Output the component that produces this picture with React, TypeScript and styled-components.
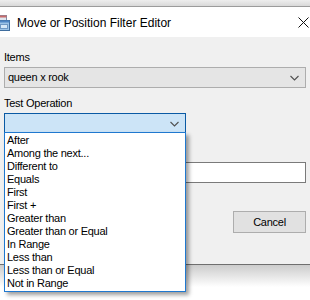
import React from "react";
import styled, { createGlobalStyle } from "styled-components";

const Global = createGlobalStyle`
  html, body { margin: 0; padding: 0; background: #ffffff; }
  body { overflow: hidden; font-family: "Liberation Sans", Arial, sans-serif; }
`;

const Page = styled.div`
  width: 310px;
  height: 300px;
  overflow: hidden;
  display: flex;
  flex-direction: column;
`;

const TopShade = styled.div`
  height: 6px;
  background: linear-gradient(#eeeeee, #d9d9d9);
  flex: none;
`;

const Window = styled.div`
  border-top: 1px solid #9c9c9c;
  border-bottom: 1px solid #6f6f6f;
  display: flex;
  flex-direction: column;
  flex: none;
`;

const TitleBar = styled.div`
  height: 30px;
  background: #ffffff;
  display: flex;
  align-items: center;
  padding-right: 1px;
`;

const AppIcon = styled.svg`
  width: 16px;
  height: 16px;
  margin-left: -6px;
  margin-top: 1px;
  flex: none;
`;

const Title = styled.div`
  font-family: "Liberation Sans", Arial, sans-serif;
  font-size: 12px;
  color: #000;
  margin-left: 7px;
  flex: 1;
  margin-top: 1px;
`;

const CloseIcon = styled.svg`
  width: 11px;
  height: 11px;
  flex: none;
`;

const Body = styled.div`
  position: relative;
  height: 213px;
  background: #f0f0f0;
  padding: 14px 4px 0 4px;
  display: flex;
  flex-direction: column;
  font-size: 11px;
  letter-spacing: -0.25px;
  color: #000;
`;

const Label = styled.div<{ $gap?: number }>`
  height: 13px;
  line-height: 13px;
  margin-top: ${(p) => p.$gap ?? 0}px;
`;

const Combo = styled.div<{ $active?: boolean; $width?: number }>`
  box-sizing: border-box;
  height: 21px;
  width: ${(p) => (p.$width ? `${p.$width}px` : "100%")};
  border: 1px solid ${(p) => (p.$active ? "#0a5aa4" : "#adadad")};
  background: ${(p) => (p.$active ? "#cce4f7" : "#e5e5e5")};
  display: flex;
  align-items: center;
  padding: 0 6px 0 3px;
  margin-top: 3px;
`;

const ComboText = styled.span`
  flex: 1;
  line-height: 13px;
`;

const Chevron = styled.svg`
  width: 9px;
  height: 6px;
  flex: none;
`;

const TextBox = styled.div`
  box-sizing: border-box;
  height: 21px;
  margin-top: 28px;
  background: #fff;
  border: 1px solid #7a7a7a;
`;

const ButtonRow = styled.div`
  display: flex;
  justify-content: flex-end;
  margin-top: 28px;
`;

const Button = styled.div`
  box-sizing: border-box;
  width: 73px;
  height: 22px;
  border: 1px solid #adadad;
  background: #e1e1e1;
  display: flex;
  align-items: center;
  justify-content: center;
`;

const DropList = styled.div`
  position: absolute;
  left: 4px;
  top: 95px;
  width: 182px;
  box-sizing: border-box;
  border: 1px solid #1f78cf;
  background: #fff;
  padding: 1px 0 1px 2px;
  box-shadow: 3px 3px 4px rgba(0, 0, 0, 0.38);
  z-index: 2;
`;

const Option = styled.div`
  height: 13px;
  line-height: 13px;
  white-space: nowrap;
`;

const BottomShade = styled.div`
  height: 22px;
  background: linear-gradient(#cccccc, #ffffff);
  flex: none;
`;

const options = [
  "After",
  "Among the next...",
  "Different to",
  "Equals",
  "First",
  "First +",
  "Greater than",
  "Greater than or Equal",
  "In Range",
  "Less than",
  "Less than or Equal",
  "Not in Range",
];

const ChevronDown = () => (
  <Chevron viewBox="0 0 9 6">
    <path d="M0.5 1 L4.5 5 L8.5 1" fill="none" stroke="#505050" strokeWidth="1.1" />
  </Chevron>
);

export default function App() {
  return (
    <>
      <Global />
      <Page>
        <TopShade />
        <Window>
          <TitleBar>
            <AppIcon viewBox="0 0 16 16">
              <rect x="1.5" y="0.5" width="11" height="9" fill="#dfe7ef" stroke="#7f8fa6" />
              <rect x="1.5" y="0.5" width="11" height="2" fill="#c86a6a" />
              <rect x="4.5" y="5.5" width="11" height="10" fill="#9cc3e6" stroke="#3f6d9e" />
              <rect x="4.5" y="5.5" width="11" height="2" fill="#4f86c4" />
              <rect x="6.5" y="9.5" width="7" height="4" fill="#d6e8f7" stroke="#6f98c4" />
            </AppIcon>
            <Title>Move or Position Filter Editor</Title>
            <CloseIcon viewBox="0 0 11 11">
              <path d="M0.5 0.5 L10.5 10.5 M10.5 0.5 L0.5 10.5" stroke="#111" strokeWidth="1" />
            </CloseIcon>
          </TitleBar>
          <Body>
            <Label>Items</Label>
            <Combo>
              <ComboText>queen x rook</ComboText>
              <ChevronDown />
            </Combo>
            <Label $gap={9}>Test Operation</Label>
            <Combo $active $width={182}>
              <ComboText />
              <ChevronDown />
            </Combo>
            <TextBox />
            <ButtonRow>
              <Button>Cancel</Button>
            </ButtonRow>
            <DropList>
              {options.map((o) => (
                <Option key={o}>{o}</Option>
              ))}
            </DropList>
          </Body>
        </Window>
        <BottomShade />
      </Page>
    </>
  );
}
